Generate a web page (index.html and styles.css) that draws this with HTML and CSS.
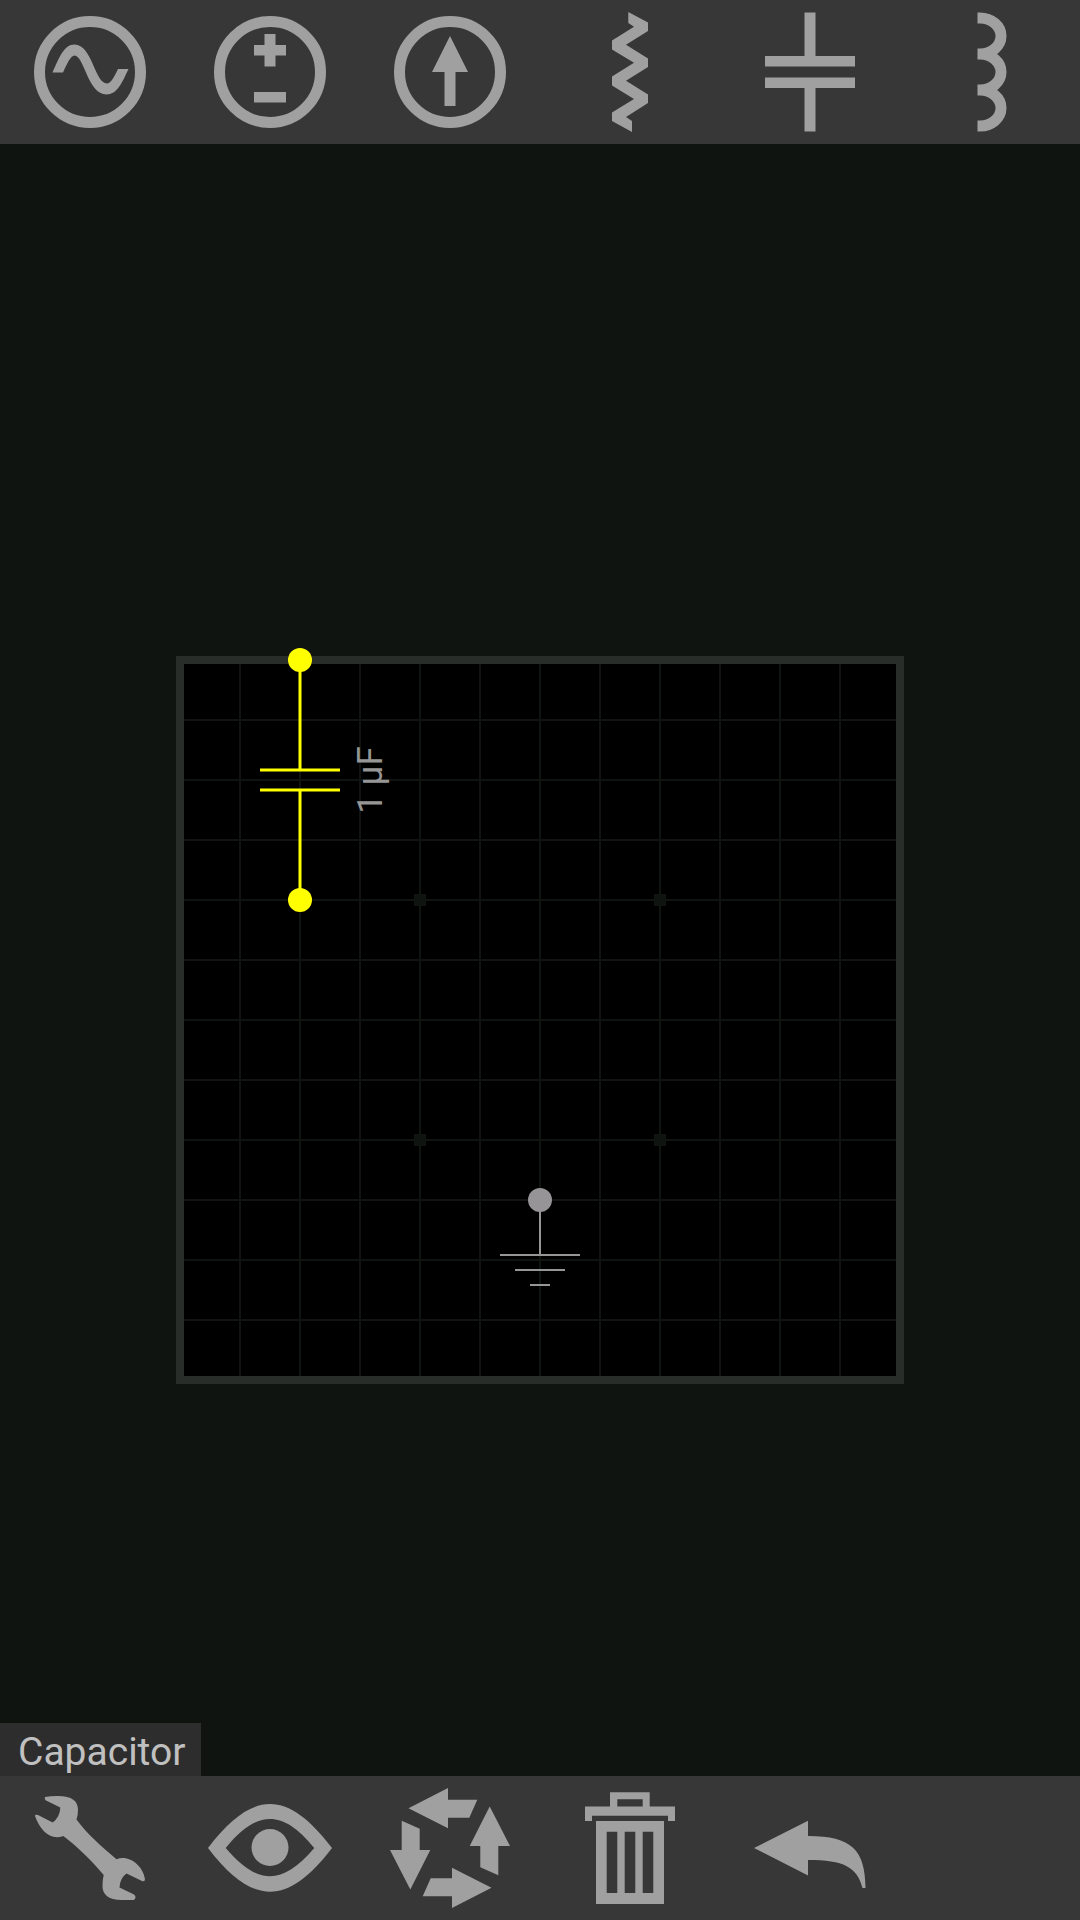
FILE: index.html
```html
<!DOCTYPE html>
<html lang="en">
<head>
<meta charset="utf-8">
<meta name="viewport" content="width=device-width, initial-scale=1">
<title>Circuit editor</title>
<link rel="stylesheet" href="styles.css">
</head>
<body>
<div class="app">
  <nav class="toolbar" aria-label="Components">
    <button class="tool" type="button" aria-label="AC voltage source">
      <svg class="icon" viewBox="0 0 180 144">
        <circle class="ring" cx="90" cy="72" r="50.5"/>
        <path d="M52.5 72.5C59 58 64 44.5 74.5 44.5C92 44.5 95 83.500 107 83.500C111 83.500 114 77 118 69H128.500C122 83 117 94.500 106.500 94.500C88 94.500 84 55.500 74.500 55.500C70.500 55.500 67 64 63 72.500Z"/>
      </svg>
    </button>
    <button class="tool" type="button" aria-label="DC voltage source">
      <svg class="icon" viewBox="0 0 180 144">
        <circle class="ring" cx="90" cy="72" r="50.5"/>
        <path d="M84.500 34H95.500V45H106V55.500H95.500V66.500H84.500V55.500H74V45H84.500ZM74 92H106V102.500H74Z"/>
      </svg>
    </button>
    <button class="tool" type="button" aria-label="Current source">
      <svg class="icon" viewBox="0 0 180 144">
        <circle class="ring" cx="90" cy="72" r="50.5"/>
        <path d="M90 36L108 72H95.500V106H84.500V72H72Z"/>
      </svg>
    </button>
    <button class="tool" type="button" aria-label="Resistor">
      <svg class="icon" viewBox="0 0 180 144">
        <path d="M88.300 12L108 22.500V31L86 44.700L108 58.500V67L86 80.700L108 94.500V103L86 117L92 121V132L72 121V112.500L94 99L72 85.500V76.500L94 62.700L72 49.500V40.500L94 26.700L88.300 23Z"/>
      </svg>
    </button>
    <button class="tool" type="button" aria-label="Capacitor">
      <svg class="icon" viewBox="0 0 180 144">
        <path d="M84.500 12.500H95.500V56H135V66.500H45V56H84.500ZM45 77.500H135V88H95.500V131.500H84.500V88H45Z"/>
      </svg>
    </button>
    <button class="tool" type="button" aria-label="Inductor">
      <svg class="icon" viewBox="0 0 180 144">
        <path class="coil" d="M77.500 18H80A21 18 0 0 1 80 54H77.500M77.500 54H80A21 18 0 0 1 80 90H77.500M77.500 90H80A21 18 0 0 1 80 126H77.500"/>
      </svg>
    </button>
  </nav>

  <main class="workspace">
    <svg class="board" viewBox="-20 -20 760 760" role="img" aria-label="Circuit board">
      <defs>
        <pattern id="grid" width="60" height="60" patternUnits="userSpaceOnUse">
          <path class="grid-line" d="M0 0H60V60H0Z"/>
        </pattern>
      </defs>
      <rect class="board-face" width="720" height="720"/>
      <rect width="720" height="720" fill="url(#grid)"/>
      <path class="grid-mark" d="M234 234h12v12h-12ZM474 234h12v12h-12ZM234 474h12v12h-12ZM474 474h12v12h-12Z"/>
      <rect class="board-edge" width="720" height="720"/>

      <g class="ground">
        <path d="M360 540V595M320 595H400M335 610H385M350 625H370"/>
        <circle cx="360" cy="540" r="12"/>
      </g>

      <g class="capacitor">
        <path d="M120 0V110M80 110H160M80 130H160M120 130V240"/>
        <circle cx="120" cy="0" r="12"/>
        <circle cx="120" cy="240" r="12"/>
      </g>
      <text class="value" text-anchor="middle" transform="translate(202 120) rotate(-90)">1 µF</text>
    </svg>
    <div class="status" role="status">Capacitor</div>
  </main>

  <nav class="toolbar" aria-label="Actions">
    <button class="tool" type="button" aria-label="Edit properties">
      <svg class="icon" viewBox="0 0 180 144">
        <path d="M45 21Q50 20 58 20C72 20 78 25 78 34Q78 39 76.500 43.500C87 58 101 70 116.500 83.300C128 78 143 89 145 103Q145 106 142 105L126.500 97.500Q120 102 119.500 111.500L134 118.500Q137 121 134 124H122C108 124 102 118 102.500 109Q102.500 104 103.700 99C91 84 79 72 63.300 60C50 65 40 54 35 40Q35 38 38 39L52.700 46.500Q60 41 60.300 31.500L46 24.500Q44 23 45 21Z"/>
      </svg>
    </button>
    <button class="tool" type="button" aria-label="View">
      <svg class="icon" viewBox="0 0 180 144">
        <path fill-rule="evenodd" d="M28 72C50 43 70 28 90 28S130 43 152 72C130 101 110 115.700 90 115.700S50 101 28 72ZM45.700 72C62 91 76 100.300 90 100.300S118 91 134.300 72C118 52 104 43 90 43S62 52 45.700 72Z"/>
        <circle cx="90" cy="71.500" r="18.500"/>
      </svg>
    </button>
    <button class="tool" type="button" aria-label="Rotate">
      <svg class="icon" viewBox="0 0 180 144">
        <defs><path id="turn" d="M48.500 32.300L88 12V23.700H117.300L109.300 41.700H88V52.300Z"/></defs>
        <use href="#turn"/>
        <use href="#turn" transform="rotate(90 90 72)"/>
        <use href="#turn" transform="rotate(180 90 72)"/>
        <use href="#turn" transform="rotate(270 90 72)"/>
      </svg>
    </button>
    <button class="tool" type="button" aria-label="Delete">
      <svg class="icon" viewBox="0 0 180 144">
        <path fill-rule="evenodd" d="M70 16.300H109.700V30.500H135V45H128V39.700H52V45H45V30.500H70ZM77.300 23.300V30.500H102.700V23.300ZM56 45H124V128H56ZM66.700 55.700V117H77.300V55.700ZM84.700 55.700V117H95.300V55.700ZM102.700 55.700V117H113.300V55.700Z"/>
      </svg>
    </button>
    <button class="tool" type="button" aria-label="Undo">
      <svg class="icon" viewBox="0 0 180 144">
        <path d="M34 72L88 44.700V60C132 60 145 74 145.500 112H142.500C137 91 124 84 88 84V99.500Z"/>
      </svg>
    </button>
  </nav>
</div>
</body>
</html>
```

FILE: styles.css
```css
* {
  box-sizing: border-box;
}

body {
  margin: 0;
  background: #0f1410;
  font-family: Roboto, "Noto Sans", sans-serif;
}

.app {
  display: flex;
  flex-direction: column;
  min-height: 100vh;
}

.toolbar {
  display: grid;
  grid-template-columns: repeat(6, 1fr);
  background: #373737;
}

.tool {
  display: flex;
  justify-content: center;
  height: 144px;
  margin: 0;
  padding: 0;
  border: 0;
  background: none;
  cursor: pointer;
}

.icon {
  width: 100%;
  height: 100%;
  fill: #a0a0a0;
}

.ring,
.coil {
  fill: none;
  stroke: #a0a0a0;
  stroke-width: 11px;
}

.workspace {
  position: relative;
  display: flex;
  flex: 1;
  align-items: center;
  justify-content: center;
  padding-top: 120px;
}

.board {
  width: 100%;
  max-width: 760px;
}

.board-face {
  fill: #000;
}

.board-edge {
  fill: none;
  stroke: #282d29;
  stroke-width: 8px;
}

.grid-line {
  fill: none;
  stroke: #0f1410;
  stroke-width: 2px;
}

.grid-mark {
  fill: #0f1410;
}

.ground {
  fill: #969496;
  stroke: none;
}

.ground path {
  stroke: #969696;
  stroke-width: 2px;
}

.capacitor {
  fill: #ff0;
}

.capacitor path {
  stroke: #ff0;
  stroke-width: 3px;
}

.value {
  fill: #969696;
  font-size: 35px;
}

.status {
  position: absolute;
  bottom: 0;
  left: 0;
  padding: 5px 16px 0 18px;
  background: #2d2d2d;
  color: #c0c0c0;
  font-size: 39px;
  line-height: 48px;
}
```
